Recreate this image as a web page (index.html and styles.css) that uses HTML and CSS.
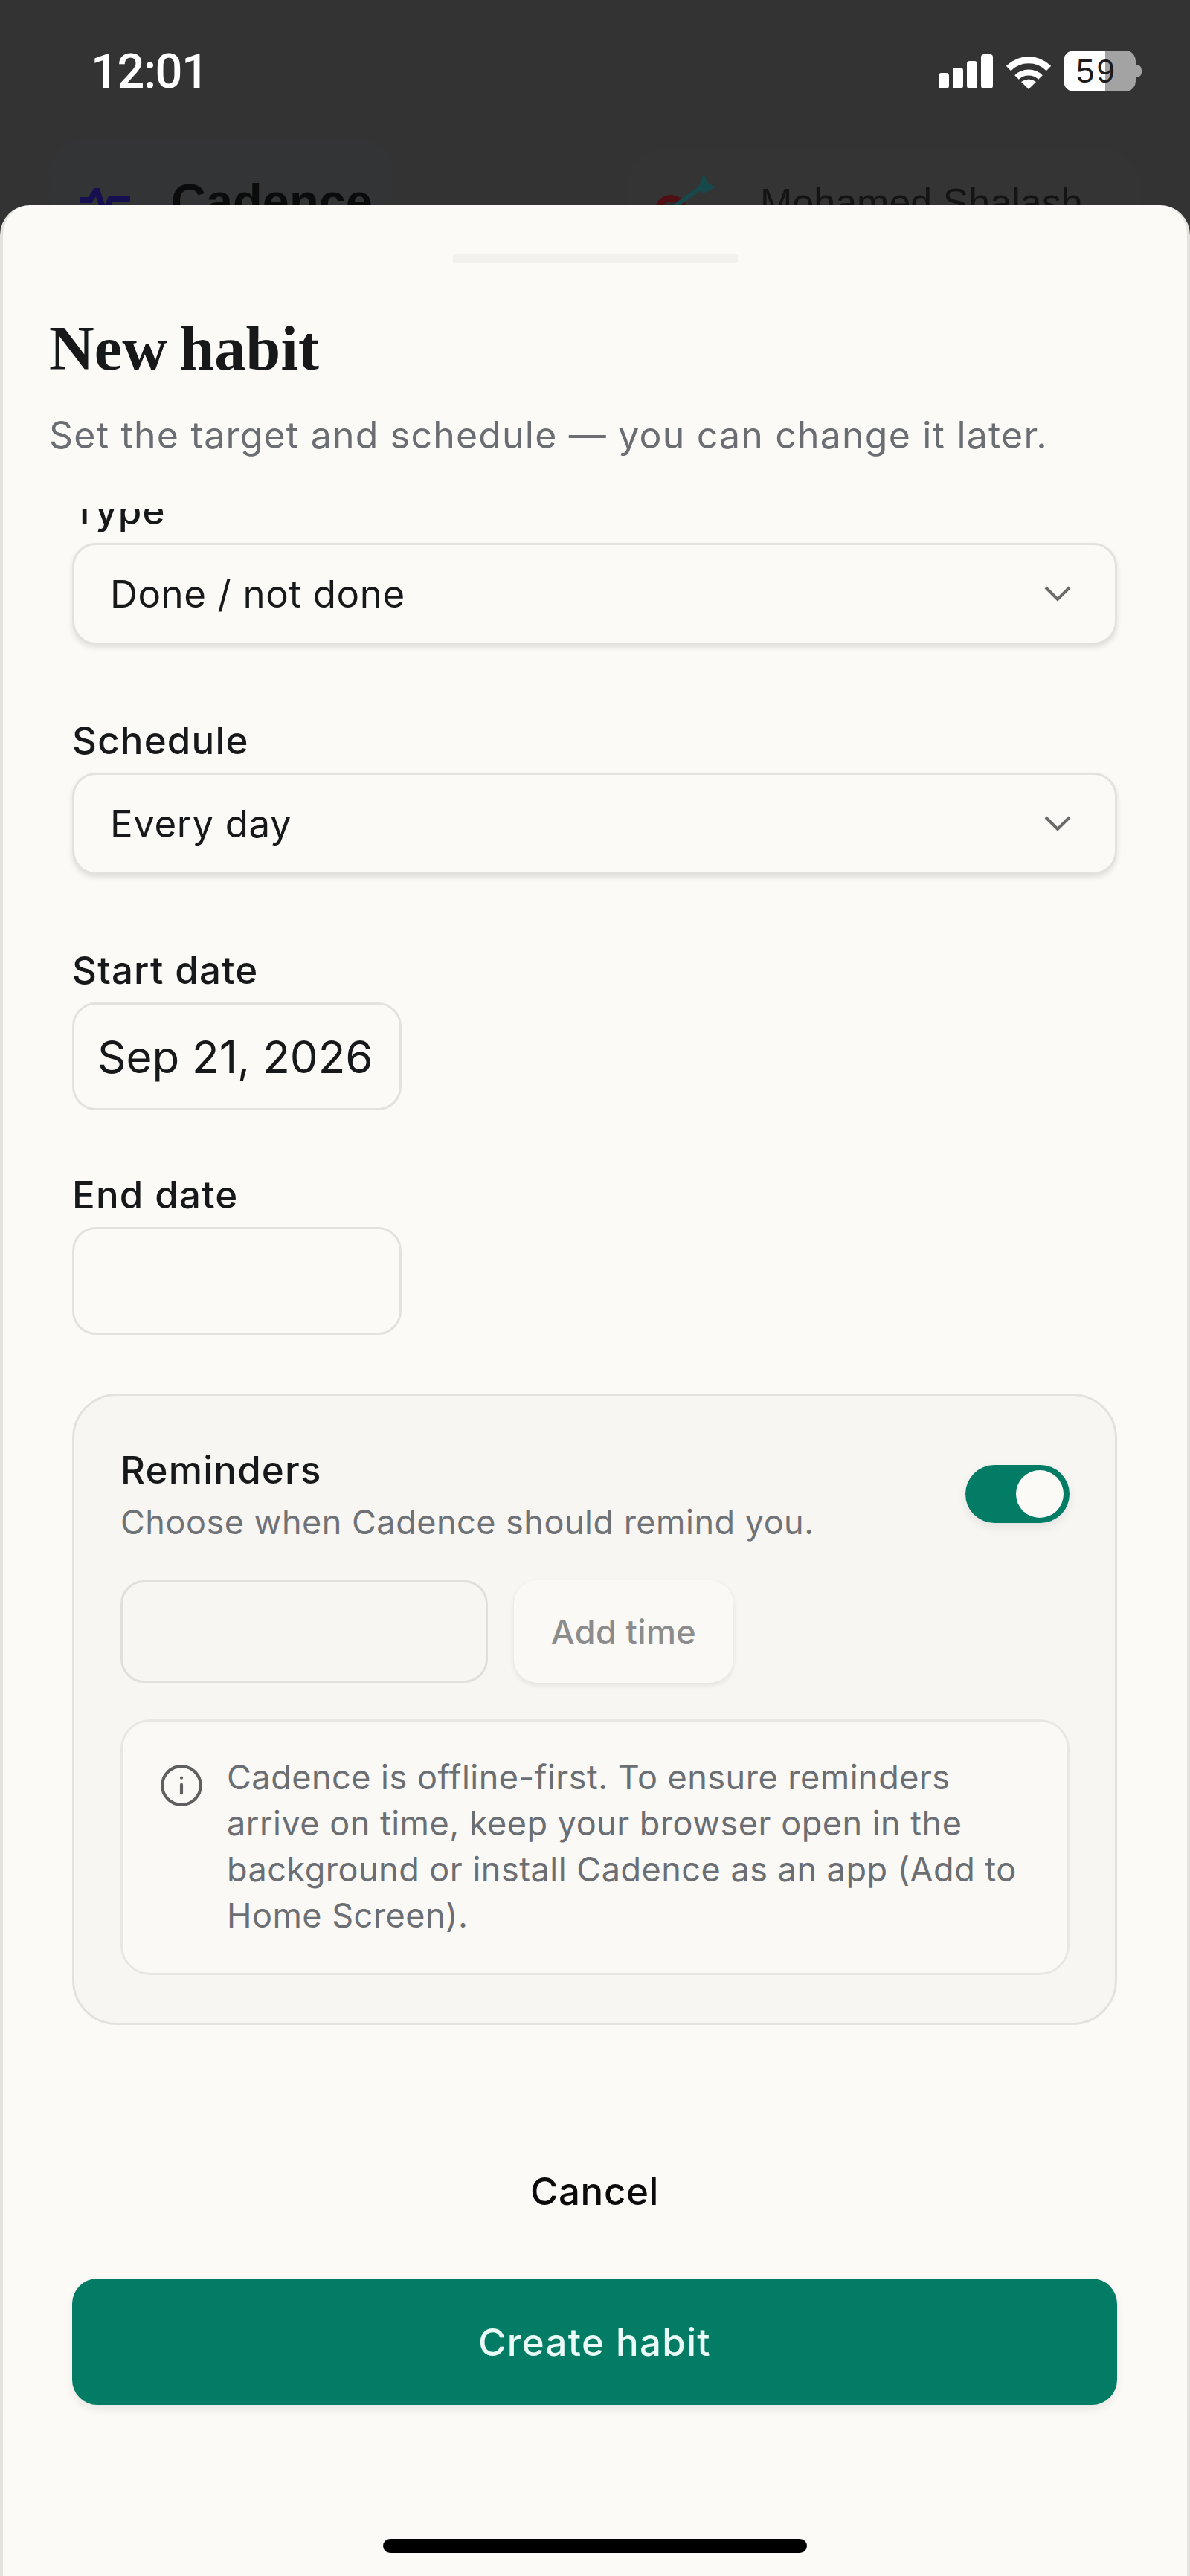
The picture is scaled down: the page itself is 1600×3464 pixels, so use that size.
FILE: index.html
```html
<!DOCTYPE html>
<html lang="en">
<head>
<meta charset="utf-8">
<title>New habit</title>
<link rel="stylesheet" href="styles.css">
</head>
<body>
<div class="statusbar">
  <div class="time">12:01</div>
  <div class="status-icons">
    <svg class="signal" viewBox="0 0 73 46" width="73" height="46"><rect x="0" y="25" width="14" height="21" rx="4"/><rect x="19" y="18" width="14" height="28" rx="4"/><rect x="38" y="9" width="14" height="37" rx="4"/><rect x="57" y="0" width="16" height="46" rx="4"/></svg>
    <svg class="wifi" viewBox="0 0 62 47" width="62" height="47"><path d="M4 19a38 38 0 0 1 54 0" fill="none" stroke="#fff" stroke-width="9"/><path d="M15 31a23 23 0 0 1 32 0" fill="none" stroke="#fff" stroke-width="8"/><path d="M31 47L21 37Q31 30 41 37Z" fill="#fff"/></svg>
    <div class="battery"><span class="battery-level">59</span><span class="battery-nub"></span></div>
  </div>
</div>

<div class="backdrop-bar">
  <div class="brand-pill">
    <svg class="brand-mark" viewBox="0 0 68 50" width="68" height="50"><path d="M0 16H14L23 2L34 34L42 14H68" fill="none" stroke="#150f4f" stroke-width="8"/></svg>
    <span class="brand-name">Cadence</span>
  </div>
  <div class="user-pill">
    <svg class="user-avatar" viewBox="0 0 100 70" width="100" height="70"><circle cx="36" cy="52" r="22" fill="#4f0f13"/><circle cx="36" cy="52" r="13" fill="#2d2b2b"/><circle cx="36" cy="52" r="6" fill="#4f0f13"/><path d="M40 46L80 18" stroke="#16484c" stroke-width="6"/><path d="M72 22L80 2L86 14L96 20L80 28Z" fill="#16484c"/></svg>
    <span class="user-name">Mohamed Shalash</span>
  </div>
</div>

<div class="sheet">
  <div class="handle"></div>
  <header class="sheet-head">
    <h1 class="sheet-title">New habit</h1>
    <p class="sheet-sub">Set the target and schedule — you can change it later.</p>
  </header>

  <div class="sheet-scroll">
    <div class="scroll-inner">
      <div class="field field-select">
        <div class="label">Type</div>
        <div class="select"><span>Done / not done</span>
          <svg class="chevron" viewBox="0 0 36 21" width="36" height="21"><path d="M2 2L18 18L34 2" fill="none" stroke="#6b6b6b" stroke-width="4"/></svg>
        </div>
      </div>
      <div class="field field-select">
        <div class="label">Schedule</div>
        <div class="select"><span>Every day</span>
          <svg class="chevron" viewBox="0 0 36 21" width="36" height="21"><path d="M2 2L18 18L34 2" fill="none" stroke="#6b6b6b" stroke-width="4"/></svg>
        </div>
      </div>
      <div class="field field-date">
        <div class="label">Start date</div>
        <div class="date-input">Sep 21, 2026</div>
      </div>
      <div class="field field-date">
        <div class="label">End date</div>
        <div class="date-input"></div>
      </div>

      <section class="reminders">
        <div class="reminders-head">
          <div>
            <div class="reminders-title">Reminders</div>
            <div class="reminders-sub">Choose when Cadence should remind you.</div>
          </div>
          <div class="toggle"><span class="toggle-knob"></span></div>
        </div>
        <div class="time-row">
          <div class="time-input"></div>
          <div class="add-time">Add time</div>
        </div>
        <div class="info">
          <svg class="info-icon" viewBox="0 0 24 24" width="62" height="62" fill="none" stroke="#5f5f5f" stroke-width="1.6" stroke-linecap="round"><circle cx="12" cy="12" r="10"/><path d="M12 16v-4.5"/><path d="M12 8h.01"/></svg>
          <p class="info-text">Cadence is offline-first. To ensure reminders arrive on time, keep your browser open in the background or install Cadence as an app (Add to Home Screen).</p>
        </div>
      </section>
    </div>
  </div>

  <footer class="sheet-foot">
    <div class="cancel">Cancel</div>
    <div class="create">Create habit</div>
    <div class="home-bar"></div>
  </footer>
</div>
</body>
</html>
```

FILE: styles.css
```css
* { box-sizing: border-box; }
html, body { margin: 0; padding: 0; }
body {
  width: 1600px;
  height: 3464px;
  overflow: hidden;
  position: relative;
  background: #333333;
  font-family: Inter, "Liberation Sans", sans-serif;
  color: #111111;
}

/* status bar */
.statusbar {
  height: 187px;
  padding: 58px 73px 0 122px;
  display: flex;
  justify-content: space-between;
  align-items: flex-start;
}
.time {
  font-family: Roboto, "Liberation Sans", sans-serif;
  font-size: 65px;
  line-height: 76px;
  font-weight: 500;
  color: #ffffff;
  letter-spacing: -1.5px;
}
.status-icons {
  display: flex;
  align-items: flex-start;
  padding-top: 10px;
  margin-left: auto;
}
.signal { fill: #ffffff; margin-top: 5px; margin-right: 17px; }
.wifi { margin-top: 5px; margin-right: 16px; }
.battery {
  position: relative;
  width: 97px;
  height: 55px;
  border-radius: 14px;
  background: linear-gradient(to right, #ffffff 0 58%, #a3a3a3 58% 100%);
  display: flex;
  align-items: center;
  padding-left: 17px;
}
.battery-level {
  font-family: "Liberation Sans", sans-serif;
  font-size: 44px;
  font-weight: 400;
  letter-spacing: 3px;
  line-height: 55px;
  color: #1c1c1c;
}
.battery-nub {
  position: absolute;
  left: 98px;
  top: 19px;
  width: 7px;
  height: 17px;
  border-radius: 0 9px 9px 0;
  background: #a3a3a3;
}

/* page behind the sheet */
.backdrop-bar {
  display: flex;
  justify-content: space-between;
  align-items: flex-start;
  padding: 0 65px 0 66px;
}
.brand-pill {
  width: 464px;
  height: 120px;
  padding: 66px 0 0 41px;
  display: flex;
  align-items: flex-start;
  gap: 55px;
  background: #323435;
  border-radius: 44px;
}
.brand-name {
  font-family: "Liberation Sans", sans-serif;
  font-size: 65px;
  line-height: 50px;
  font-weight: 700;
  color: #0b0b0b;
  margin-top: -7px;
}
.user-pill {
  width: 695px;
  height: 110px;
  margin-top: 13px;
  padding: 32px 0 0 26px;
  display: flex;
  align-items: flex-start;
  gap: 56px;
  background: #343434;
  border-radius: 60px;
}
.user-name {
  font-family: "Liberation Sans", sans-serif;
  font-size: 52px;
  line-height: 40px;
  color: #141414;
  margin-top: 20px;
}

/* sheet */
.sheet {
  position: absolute;
  left: 0;
  top: 276px;
  width: 1600px;
  height: 3188px;
  display: flex;
  flex-direction: column;
  background: #fbfaf6;
  border-left: 4px solid #e4e3de;
  border-right: 4px solid #e4e3de;
  border-radius: 40px 40px 0 0;
}
.handle {
  flex: none;
  width: 383px;
  height: 11px;
  margin: 66px auto 0;
  background: #f2f1ed;
  border-radius: 2px;
}
.sheet-head { flex: none; padding: 66px 0 0 62px; }
.sheet-title {
  margin: 0;
  font-family: "Liberation Serif", serif;
  font-size: 84px;
  line-height: 100px;
  font-weight: 700;
  letter-spacing: 0.2px;
  word-spacing: -5px;
  color: #16181a;
}
.sheet-sub {
  margin: 31px 0 0;
  font-size: 50px;
  line-height: 70px;
  letter-spacing: 1.2px;
  color: #6a6e73;
}

.sheet-scroll {
  flex: 1;
  min-height: 0;
  overflow: hidden;
  margin-top: 65px;
}
.scroll-inner {
  margin-top: -33px;
  padding: 0 94px 0 93px;
}
.label {
  font-size: 51px;
  line-height: 70px;
  font-weight: 500;
  letter-spacing: 1.2px;
  color: #16181a;
  margin-bottom: 8px;
}
.field-select { margin-bottom: 94px; }
.field-date { margin-bottom: 79px; }
.select {
  height: 137px;
  padding: 0 59px 0 48px;
  display: flex;
  align-items: center;
  justify-content: space-between;
  background: #fbfaf7;
  border: 3px solid #e3e2dd;
  border-radius: 32px;
  box-shadow: 0 4px 7px rgba(40, 40, 30, 0.12);
  font-size: 51px;
  letter-spacing: 0.6px;
  color: #16181a;
}
.chevron { flex: none; }
.date-input {
  width: 443px;
  height: 145px;
  padding-left: 31px;
  display: flex;
  align-items: center;
  background: #fbfaf7;
  border: 3px solid #e3e2dd;
  border-radius: 32px;
  font-size: 60px;
  color: #16181a;
}

.reminders {
  padding: 68px 61px 64px 62px;
  background: #f7f6f2;
  border: 3px solid #e3e2dd;
  border-radius: 60px;
}
.reminders-head {
  display: flex;
  justify-content: space-between;
  align-items: flex-start;
}
.reminders-title {
  font-size: 51px;
  line-height: 64px;
  font-weight: 500;
  letter-spacing: 1.2px;
  color: #16181a;
}
.reminders-sub {
  margin-top: 8px;
  font-size: 45px;
  line-height: 60px;
  letter-spacing: 0.5px;
  color: #6f7276;
}
.toggle {
  flex: none;
  position: relative;
  width: 140px;
  height: 78px;
  margin-top: 25px;
  background: #037c66;
  border-radius: 39px;
  box-shadow: 0 6px 14px rgba(0, 0, 0, 0.08);
}
.toggle-knob {
  position: absolute;
  right: 8px;
  top: 7px;
  width: 64px;
  height: 64px;
  border-radius: 50%;
  background: #fbfaf6;
}
.time-row {
  display: flex;
  gap: 35px;
  margin-top: 48px;
}
.time-input {
  width: 494px;
  height: 138px;
  background: #f7f6f2;
  border: 3px solid #e0dfda;
  border-radius: 32px;
}
.add-time {
  width: 295px;
  height: 138px;
  display: flex;
  align-items: center;
  justify-content: center;
  background: #faf9f6;
  border-radius: 32px;
  box-shadow: 0 3px 7px rgba(40, 40, 30, 0.1);
  font-size: 45px;
  font-weight: 500;
  letter-spacing: 0.4px;
  color: #8c8c8c;
}
.info {
  display: flex;
  align-items: flex-start;
  gap: 30px;
  margin-top: 49px;
  padding: 44px 44px 46px 48px;
  background: #faf9f5;
  border: 3px solid #e8e7e2;
  border-radius: 40px;
}
.info-icon { flex: none; margin-top: 11px; }
.info-text {
  margin: 0;
  font-size: 45px;
  line-height: 62px;
  letter-spacing: 0.5px;
  color: #6b6e72;
}

/* footer */
.sheet-foot {
  flex: none;
  height: 552px;
  padding: 0 94px 31px 93px;
  display: flex;
  flex-direction: column;
}
.cancel {
  height: 70px;
  line-height: 70px;
  text-align: center;
  font-size: 51px;
  font-weight: 500;
  letter-spacing: 0.6px;
  color: #0b0b0b;
}
.create {
  height: 170px;
  margin-top: 82px;
  display: flex;
  align-items: center;
  justify-content: center;
  background: #037c66;
  border-radius: 34px;
  box-shadow: 0 6px 12px rgba(0, 0, 0, 0.08);
  font-size: 51px;
  font-weight: 500;
  letter-spacing: 1.3px;
  color: #eafaf4;
}
.home-bar {
  width: 570px;
  height: 19px;
  margin: 180px auto 0;
  background: #000000;
  border-radius: 10px;
}
```
